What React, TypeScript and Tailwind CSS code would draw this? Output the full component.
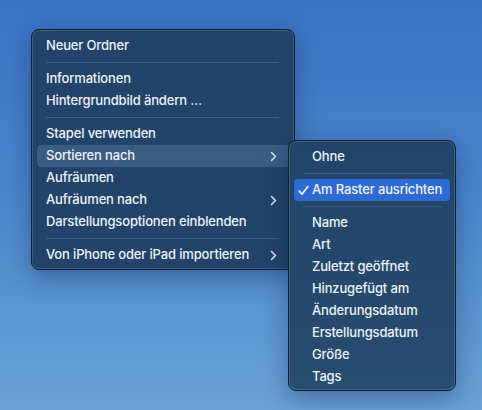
import React from "react";

const Chevron = () => (
  <svg width="7" height="11" viewBox="0 0 7 11" className="shrink-0">
    <path d="M1.5 1.5 L5.5 5.5 L1.5 9.5" fill="none" stroke="#dfe6ee" strokeWidth="1.6" strokeLinecap="round" strokeLinejoin="round" />
  </svg>
);

const Check = () => (
  <svg width="11" height="11" viewBox="0 0 11 11" className="shrink-0">
    <path d="M1.2 6 L4 9.2 L9.8 1.5" fill="none" stroke="#ffffff" strokeWidth="1.6" strokeLinecap="round" strokeLinejoin="round" />
  </svg>
);

const Row = ({ label, chevron, active }: { label: string; chevron?: boolean; active?: boolean }) => (
  <div
    className={`h-[22px] mx-[5px] pl-[9px] pr-[12px] rounded-[4px] flex items-center justify-between ${active ? "bg-[#3a5d84]" : ""}`}
  >
    <span>{label}</span>
    {chevron && <Chevron />}
  </div>
);

const Sep = ({ cls }: { cls: string }) => (
  <div className={`h-[11px] flex items-center ${cls}`}>
    <div className="h-px w-full bg-[#3f5f84]" />
  </div>
);

const SubRow = ({ label, checked }: { label: string; checked?: boolean }) => (
  <div
    className={`h-[22px] mx-[5px] rounded-[4px] flex items-center ${checked ? "bg-[#2f6ad3]" : ""}`}
  >
    <span className="w-[18px] pl-[4px] flex items-center">{checked && <Check />}</span>
    <span>{label}</span>
  </div>
);

export default function App() {
  return (
    <div
      className="relative w-[482px] h-[410px] overflow-hidden bg-gradient-to-b from-[#3a73c3] via-[#4a86cc] to-[#6aa2d6] text-[13px] font-medium tracking-[-0.15px] text-[#eef2f7]"
      style={{ fontFamily: "Inter, 'Noto Sans', sans-serif" }}
    >
      <div className="absolute left-[31px] top-[29px] w-[264px] h-[241px] rounded-[8px] border border-[#121d2d] bg-[#22446a] shadow-[0_8px_24px_rgba(0,20,60,0.35),inset_0_0_0_1px_rgba(255,255,255,0.14)] pt-[5px] pb-[3px]">
        <Row label="Neuer Ordner" />
        <Sep cls="ml-[14px] mr-[15px]" />
        <Row label="Informationen" />
        <Row label="Hintergrundbild ändern …" />
        <Sep cls="ml-[14px] mr-[15px]" />
        <Row label="Stapel verwenden" />
        <Row label="Sortieren nach" chevron active />
        <Row label="Aufräumen" />
        <Row label="Aufräumen nach" chevron />
        <Row label="Darstellungsoptionen einblenden" />
        <Sep cls="ml-[14px] mr-[15px]" />
        <Row label="Von iPhone oder iPad importieren" chevron />
      </div>

      <div className="absolute left-[288px] top-[140px] w-[168px] h-[251px] rounded-[8px] border border-[#121d2d] bg-gradient-to-b from-[#22446a] to-[#274d70] shadow-[0_8px_24px_rgba(0,20,60,0.35),inset_0_0_0_1px_rgba(255,255,255,0.14)] pt-[5px] pb-[3px]">
        <SubRow label="Ohne" />
        <Sep cls="ml-[14px] mr-[13px]" />
        <SubRow label="Am Raster ausrichten" checked />
        <Sep cls="ml-[14px] mr-[13px]" />
        <SubRow label="Name" />
        <SubRow label="Art" />
        <SubRow label="Zuletzt geöffnet" />
        <SubRow label="Hinzugefügt am" />
        <SubRow label="Änderungsdatum" />
        <SubRow label="Erstellungsdatum" />
        <SubRow label="Größe" />
        <SubRow label="Tags" />
      </div>
    </div>
  );
}
